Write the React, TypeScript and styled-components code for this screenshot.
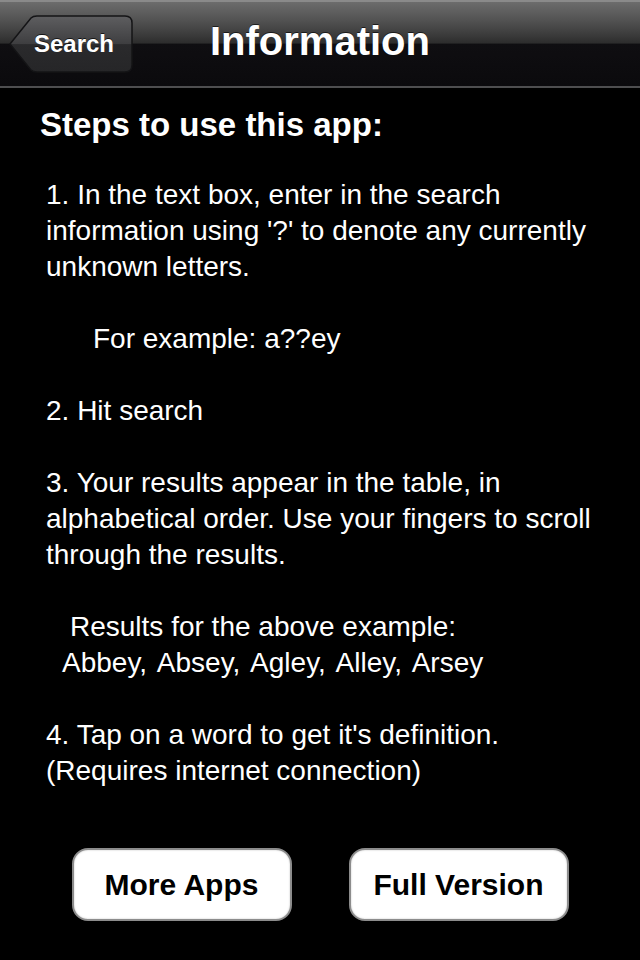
import { FC } from 'react';
import { createGlobalStyle, styled } from 'styled-components';

const GlobalStyle = createGlobalStyle`
  html, body {
    margin: 0;
    padding: 0;
    background: #000;
  }
  body {
    font-family: "Liberation Sans", Arial, Helvetica, sans-serif;
    color: #fff;
  }
`;

const Screen = styled.div`
  width: 640px;
  height: 960px;
  background: #000;
  display: flex;
  flex-direction: column;
  overflow: hidden;
`;

const NavBar = styled.header`
  position: relative;
  flex: none;
  display: flex;
  align-items: center;
  justify-content: center;
  border-top: 2px solid #8a8a8a;
  border-bottom: 2px solid #4e4e50;
  box-sizing: border-box;
  height: 88px;
  background: linear-gradient(
    to bottom,
    #6c6c6c 0%,
    #525252 22%,
    #3a3a3a 40%,
    #2c2c2c 49%,
    #0f0e11 50%,
    #0b0a0d 100%
  );
`;

const BackButton = styled.button`
  position: absolute;
  left: 9px;
  top: 13px;
  height: 58px;
  width: 124px;
  padding: 0 0 0 6px;
  border: none;
  background: transparent;
  cursor: pointer;
  display: flex;
  align-items: center;
  justify-content: center;
  color: #fff;
  font-family: "Liberation Sans", Arial, sans-serif;
  font-weight: 700;
  font-size: 24px;
  text-shadow: 0 -1px 0 rgba(0, 0, 0, 0.7);

  svg {
    position: absolute;
    inset: 0;
    z-index: 0;
  }
  span {
    position: relative;
    z-index: 1;
  }
`;

const Title = styled.h1`
  margin: 0 0 5px 0;
  font-size: 40px;
  font-weight: 700;
  color: #fff;
  text-shadow: 0 -1px 0 rgba(0, 0, 0, 0.6);
`;

const Content = styled.main`
  flex: 1;
  display: flex;
  flex-direction: column;
  padding: 17px 0 0 40px;
`;

const Heading = styled.h2`
  margin: 0 0 32px 0;
  font-size: 33px;
  font-weight: 700;
  line-height: 40px;
`;

const Body = styled.div`
  padding-left: 6px;
  font-size: 28px;
  line-height: 36px;
  color: #fff;
`;

const Line = styled.p<{ $indent?: number; $gap?: boolean; $spread?: number }>`
  margin: 0;
  padding-left: ${(p) => p.$indent ?? 0}px;
  margin-top: ${(p) => (p.$gap ? 36 : 0)}px;
  word-spacing: ${(p) => p.$spread ?? 0}px;
  white-space: nowrap;
`;

const Actions = styled.div`
  margin-top: auto;
  margin-bottom: 39px;
  display: flex;
  justify-content: center;
  gap: 57px;
  padding-right: 40px;
`;

const ActionButton = styled.button`
  width: 220px;
  height: 73px;
  border-radius: 16px;
  border: 2px solid #8c8c8c;
  background: #fff;
  box-shadow: inset 0 0 2px rgba(0, 0, 0, 0.25);
  color: #000;
  font-family: "Liberation Sans", Arial, sans-serif;
  font-weight: 700;
  font-size: 30px;
  cursor: pointer;
`;

const BackShape: FC = () => (
  <svg width="124" height="58" viewBox="0 0 124 58">
    <defs>
      <linearGradient id="backFill" x1="0" y1="0" x2="0" y2="1">
        <stop offset="0" stopColor="#5e5e60" />
        <stop offset="0.5" stopColor="#3e3e40" />
        <stop offset="0.51" stopColor="#2a2a2c" />
        <stop offset="1" stopColor="#262628" />
      </linearGradient>
    </defs>
    <path
      d="M1 29 L22 3 Q24 1 28 1 L116 1 Q123 1 123 8 L123 50 Q123 57 116 57 L28 57 Q24 57 22 55 Z"
      fill="url(#backFill)"
      stroke="#141416"
      strokeWidth="1.5"
    />
  </svg>
);

const App: FC = (): JSX.Element => {
  return (
    <Screen>
      <GlobalStyle />
      <NavBar>
        <BackButton>
          <BackShape />
          <span>Search</span>
        </BackButton>
        <Title>Information</Title>
      </NavBar>
      <Content>
        <Heading>Steps to use this app:</Heading>
        <Body>
          <Line>1. In the text box, enter in the search</Line>
          <Line>information using '?' to denote any currently</Line>
          <Line>unknown letters.</Line>
          <Line $gap $indent={47}>For example: a??ey</Line>
          <Line $gap>2. Hit search</Line>
          <Line $gap>3. Your results appear in the table, in</Line>
          <Line>alphabetical order. Use your fingers to scroll</Line>
          <Line>through the results.</Line>
          <Line $gap $indent={24}>Results for the above example:</Line>
          <Line $indent={16} $spread={3.5}>Abbey, Absey, Agley, Alley, Arsey</Line>
          <Line $gap>4. Tap on a word to get it's definition.</Line>
          <Line>(Requires internet connection)</Line>
        </Body>
        <Actions>
          <ActionButton>More Apps</ActionButton>
          <ActionButton>Full Version</ActionButton>
        </Actions>
      </Content>
    </Screen>
  );
};

export default App;
